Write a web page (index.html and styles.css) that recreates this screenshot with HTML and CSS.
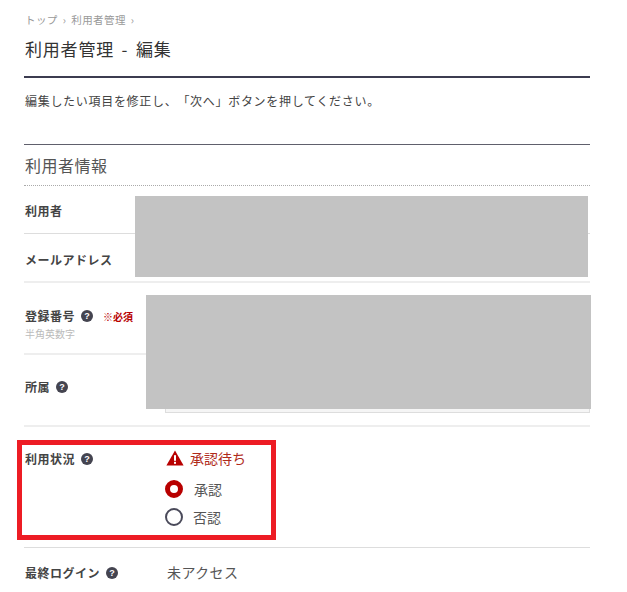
FILE: index.html
```html
<!DOCTYPE html>
<html lang="ja">
<head>
    <meta charset="UTF-8">
    <meta name="viewport" content="width=device-width, initial-scale=1.0">
    <title>利用者管理 - 編集</title>
    <link rel="stylesheet" href="styles.css">
</head>
<body>
    <div class="container">
        <div class="breadcrumb">トップ<span class="sep">›</span>利用者管理<span class="sep">›</span></div>
        <h1>利用者管理 - 編集</h1>
        <p class="lead">編集したい項目を修正し、「次へ」ボタンを押してください。</p>
        <h2>利用者情報</h2>

        <div class="row row-user">
            <div class="label">利用者</div>
        </div>
        <div class="row row-mail">
            <div class="label">メールアドレス</div>
        </div>
        <div class="row row-number">
            <div class="label-col">
                <div class="label">登録番号<span class="help">?</span><span class="required">※必須</span></div>
                <div class="note">半角英数字</div>
            </div>
        </div>
        <div class="row row-group">
            <div class="label">所属<span class="help">?</span></div>
            <div class="input-box"></div>
        </div>
        <div class="row row-status">
            <div class="label label-fixed">利用状況<span class="help">?</span></div>
            <div class="status-col">
                <div class="status">
                    <svg class="warn" width="18" height="16" viewBox="0 0 18 16">
                        <path d="M9 0.5 L17.6 15.5 L0.4 15.5 Z" fill="#b80000"/>
                        <rect x="8" y="5.2" width="2" height="5.6" fill="#fff"/>
                        <rect x="8" y="11.8" width="2" height="2" fill="#fff"/>
                    </svg>
                    承認待ち
                </div>
                <div class="radio-item"><span class="radio on"></span><span class="radio-text on-text">承認</span></div>
                <div class="radio-item"><span class="radio"></span><span class="radio-text">否認</span></div>
            </div>
        </div>
        <div class="row row-login">
            <div class="label label-fixed">最終ログイン<span class="help">?</span></div>
            <div class="value">未アクセス</div>
        </div>

        <!-- masked areas and highlight drawn over the form -->
        <div class="mask mask-a"></div>
        <div class="mask mask-b"></div>
        <div class="highlight"></div>
    </div>
</body>
</html>
```

FILE: styles.css
```css
* {
    margin: 0;
    padding: 0;
    box-sizing: border-box;
}
html, body {
    height: 592px;
    overflow: hidden;
    background: #fff;
}
body {
    font-family: 'Noto Sans CJK JP', 'Noto Sans', sans-serif;
    color: #4a4a55;
    text-spacing-trim: space-all;
}
.container {
    position: relative;
    width: 590px;
    padding: 13px 0 0 25px;
}
.breadcrumb {
    font-size: 10.5px;
    letter-spacing: 0.4px;
    line-height: 14px;
    color: #999;
}
.sep {
    margin: 0 5px;
}
h1 {
    font-size: 17px;
    font-weight: 400;
    letter-spacing: 0.8px;
    word-spacing: 3px;
    line-height: 26px;
    margin: 9px 0 0 -1px;
    padding: 0 0 14px 1px;
    color: #333;
    border-bottom: 2px solid #3c3c50;
}
.lead {
    font-size: 12px;
    letter-spacing: 0.7px;
    line-height: 18px;
    margin: 14px 0 0 -1px;
    padding-left: 1px;
    height: 53px;
    color: #444;
    border-bottom: 1px solid #60606c;
}
h2 {
    font-size: 16px;
    font-weight: 400;
    letter-spacing: 0.5px;
    line-height: 24px;
    margin-left: -1px;
    padding: 8px 0 0 1px;
    height: 41px;
    color: #555;
    border-bottom: 1px dotted #aaa;
}
.row {
    display: flex;
    margin-left: -1px;
    padding-left: 1px;
    border-bottom: 2px solid #eee;
}
.label {
    font-size: 12px;
    font-weight: 700;
    letter-spacing: 0.5px;
    line-height: 18px;
    color: #444;
}
.label-fixed {
    flex: 0 0 140px;
}
.row-user {
    height: 48px;
    padding-top: 16px;
    border-bottom: 1px solid #ddd;
}
.row-mail {
    height: 49px;
    padding-top: 17px;
}
.row-number {
    height: 72px;
    padding-top: 24px;
}
.note {
    font-size: 10px;
    line-height: 13px;
    margin-top: 1px;
    color: #bbb;
}
.required {
    font-size: 10px;
    letter-spacing: 0;
    color: #b80000;
    margin-left: 10px;
}
.help {
    display: inline-block;
    width: 12px;
    height: 12px;
    margin-left: 6px;
    border-radius: 50%;
    background: #444450;
    color: #fff;
    font-family: 'Liberation Sans', sans-serif;
    font-size: 9px;
    font-weight: 700;
    letter-spacing: 0;
    line-height: 12px;
    text-align: center;
    vertical-align: 2px;
}
.row-group {
    position: relative;
    height: 72px;
    padding-top: 23px;
}
.input-box {
    position: absolute;
    left: 141px;
    right: 0;
    top: 20px;
    height: 38px;
    border: 1px solid #ddd;
    background: #f5f5f5;
}
.row-status {
    height: 121px;
    padding-top: 23px;
    border-bottom: 1px solid #ddd;
}
.status-col {
    margin-top: -2px;
}
.status {
    display: flex;
    align-items: center;
    gap: 6px;
    font-size: 14px;
    line-height: 20px;
    color: #b02a1a;
    margin-left: 1px;
}
.radio-item {
    display: flex;
    align-items: center;
    height: 28px;
}
.status + .radio-item {
    margin-top: 6.5px;
}
.radio {
    width: 18px;
    height: 18px;
    border-radius: 50%;
    border: 2px solid #4a4a5a;
    background: #fff;
}
.radio.on {
    border: 5px solid #b80000;
}
.radio-text {
    font-size: 14px;
    margin-left: 10px;
    color: #555;
}
.on-text {
    margin-left: 11px;
}
.row-login {
    border-bottom: none;
    padding-top: 16px;
}
.value {
    font-size: 14px;
    letter-spacing: 0.4px;
    line-height: 20px;
    color: #555;
    margin: -2px 0 0 2px;
}
.mask {
    position: absolute;
    background: #c3c3c3;
}
.mask-a {
    left: 135px;
    top: 196px;
    width: 453px;
    height: 81px;
}
.mask-b {
    left: 146px;
    top: 295px;
    width: 445px;
    height: 114px;
}
.highlight {
    position: absolute;
    left: 17px;
    top: 440px;
    width: 259px;
    height: 100px;
    border: 5px solid #ed1c24;
}
```
